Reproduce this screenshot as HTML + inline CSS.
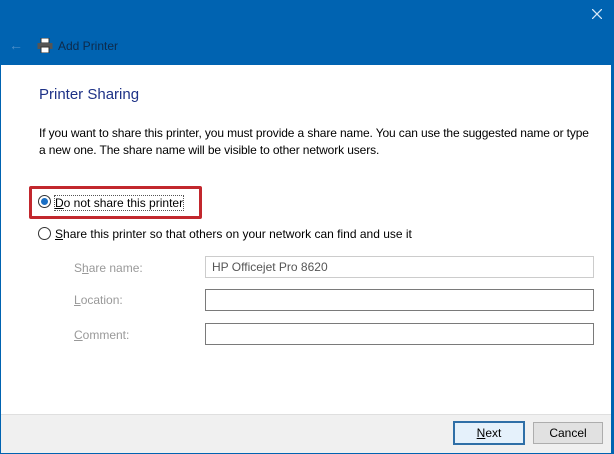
<!DOCTYPE html>
<html><head><style>
body{margin:0;width:614px;height:454px;overflow:hidden;background:#0063b1;font-family:"Liberation Sans",sans-serif;position:relative}
.a{position:absolute}
.main{left:1px;top:65px;width:610px;height:349px;background:#fff}
.foot{left:1px;top:414px;width:610px;height:38px;background:#f0f0f0;border-top:1px solid #dfdfdf}
.t{font-size:12px;color:#000}
.inp{position:absolute;left:205px;width:387px;height:20px;border:1px solid #7a7a7a;background:#fff}
.btn{position:absolute;top:422px;height:20px;border:1px solid #adadad;background:#e1e1e1;font-size:12px;text-align:center;line-height:20px}
.radio{position:absolute;width:11px;height:11px;border:1px solid #333;border-radius:50%;background:#fff}
u{text-decoration:underline}
</style></head><body>
<svg class="a" style="left:592px;top:9px" width="10" height="10" viewBox="0 0 10 10"><path d="M0 0L10 10M10 0L0 10" stroke="#d6e8f7" stroke-width="1.3"/></svg>
<div class="a" style="left:9px;top:37px;color:#4d8fc9;font-size:14px">←</div>
<svg class="a" style="left:37px;top:38px" width="16" height="15" viewBox="0 0 16 15"><rect x="4" y="0" width="8" height="5" fill="#fff" stroke="#333"/><rect x="0.5" y="5" width="15" height="6" fill="#555"/><rect x="4" y="9" width="8" height="6" fill="#fff" stroke="#333"/></svg>
<div class="a" style="left:58px;top:39px;font-size:12px;color:#0d2a4a">Add Printer</div>
<div class="a main"></div>
<div class="a foot"></div>
<div class="a" style="left:39px;top:86px;font-size:15px;color:#1e3287">Printer Sharing</div>
<div class="a t" style="left:39px;top:125px;width:570px;line-height:17px;letter-spacing:-0.12px;white-space:nowrap">If you want to share this printer, you must provide a share name. You can use the suggested name or type<br>a new one. The share name will be visible to other network users.</div>
<div class="a" style="left:29px;top:186px;width:167px;height:27px;border:3px solid #c2272d;border-radius:2px"></div>
<div class="radio" style="left:38px;top:195px"></div>
<div class="a" style="left:41px;top:198px;width:7px;height:7px;border-radius:50%;background:#1a6fc4"></div>
<div class="a t" style="left:55px;top:196px;outline:1px dotted #555"><u>D</u>o not share this printer</div>
<div class="radio" style="left:38px;top:227px"></div>
<div class="a t" style="left:55px;top:227px"><u>S</u>hare this printer so that others on your network can find and use it</div>
<div class="a t" style="left:74px;top:261px;color:#999">S<u>h</u>are name:</div>
<div class="a t" style="left:74px;top:293px;color:#999"><u>L</u>ocation:</div>
<div class="a t" style="left:74px;top:328px;color:#999"><u>C</u>omment:</div>
<div class="inp" style="top:256px;border-color:#ccc;font-size:12px;line-height:20px;padding-left:6px;width:381px;color:#555">HP Officejet Pro 8620</div>
<div class="inp" style="top:289px"></div>
<div class="inp" style="top:323px"></div>
<div class="btn" style="left:453px;width:68px;border:2px solid #2f6fa7;top:421px;background:#e5f1fb"><u>N</u>ext</div>
<div class="btn" style="left:533px;width:68px">Cancel</div>
</body></html>
